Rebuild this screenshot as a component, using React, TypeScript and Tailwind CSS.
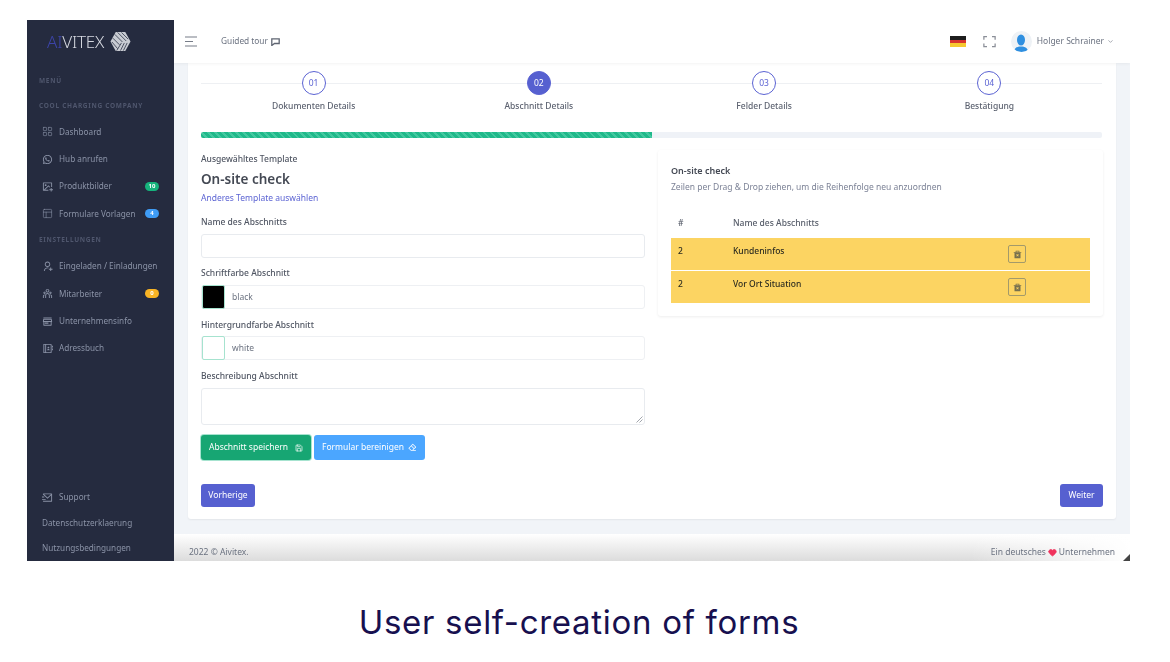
import React from "react";
import { LayoutGrid, PanelsTopLeft, ChevronDown, Save, Heart } from "lucide-react";
import { RiWhatsappLine, RiImageAddLine, RiUserAddLine, RiTeamLine, RiStore3Line, RiContactsBookLine, RiMailSendLine, RiDeleteBin2Fill, RiEraserLine, RiFullscreenLine } from "react-icons/ri";

const font = { fontFamily: '"Noto Sans", sans-serif' };

function Nav({ icon: Icon, label, badge, color }: { icon: any; label: string; badge?: string; color?: string }) {
  return (
    <div className="h-[27.4px] flex items-center pl-[15px] pr-[15px] text-[#8b93a7] text-[8.2px] whitespace-nowrap">
      <Icon size={11} className="mr-[6px] shrink-0" />
      <span className="flex-1">{label}</span>
      {badge && <span className={`w-[14px] h-[9px] rounded-full text-white text-[6px] leading-[9px] text-center font-bold ${color}`}>{badge}</span>}
    </div>
  );
}

const GridIcon = (p: any) => <LayoutGrid {...p} strokeWidth={1.3} />;
const PanelIcon = (p: any) => <PanelsTopLeft {...p} strokeWidth={1.3} />;

function Section({ children }: { children: React.ReactNode }) {
  return <div className="h-[25px] flex items-center pl-[12px] text-[#4f566d] text-[6.5px] font-bold tracking-[0.7px] uppercase">{children}</div>;
}

function Step({ n, label, active }: { n: string; label: string; active?: boolean }) {
  return (
    <div className="flex-1 flex flex-col items-center relative">
      <div className={`w-[24px] h-[24px] rounded-full border border-[#5b63d3] flex items-center justify-center text-[8.5px] z-10 ${active ? "bg-[#5660d0] text-white" : "bg-white text-[#5b63d3]"}`}>{n}</div>
      <div className="mt-[5px] text-[8.5px] leading-[12px] font-medium text-[#5c6270]">{label}</div>
    </div>
  );
}

function Label({ children }: { children: React.ReactNode }) {
  return <div className="text-[8.5px] leading-[12px] font-medium text-[#4f5562]">{children}</div>;
}

function ColorRow({ swatch, text, className }: { swatch: string; text: string; className: string }) {
  return (
    <div className={`${className} h-[24px] flex items-center border border-[#eef0f3] rounded-[3px]`}>
      <div className={`w-[23px] h-[24px] rounded-[2px] border border-[#a6e3cf] ${swatch}`} />
      <span className="ml-[7px] text-[8.5px] text-[#6b7280]">{text}</span>
    </div>
  );
}

function Row({ name }: { name: string }) {
  return (
    <div className="h-[32px] bg-[#fcd462] flex items-start text-[8.5px] font-medium text-[#2b2b20]">
      <span className="w-[62px] pl-[7px] pt-[7px] leading-[12px]">2</span>
      <span className="w-[275px] pt-[7px] leading-[12px]">{name}</span>
      <span className="mt-[7px] w-[18px] h-[18px] border border-[#a39a6a] rounded-[2px] flex items-center justify-center text-[#77704e]">
        <RiDeleteBin2Fill size={9} />
      </span>
    </div>
  );
}

export default function App() {
  return (
    <div className="w-[1170px] h-[662px] bg-white overflow-hidden" style={font}>
      <div className="pt-[20px] pl-[27px]">
        <div className="w-[1103px] h-[541px] flex bg-[#f1f4f8] overflow-hidden blur-[0.45px] relative">
          <aside className="w-[147px] shrink-0 bg-[#252b3f] flex flex-col">
            <div className="h-[43px] flex items-center pl-[20px]">
              <span className="text-[17px] font-light tracking-[-0.2px] text-[#d5d8e0]"><span className="text-[#3c44a8]">AI</span>VITEX</span>
              <svg width="21" height="21" viewBox="0 0 22 21" className="ml-[6px]">
                <path d="M6 0.5h10l5.5 10-5.5 10H6L0.5 10.5z" fill="#c8cbd2" />
                <path d="M5 3l8 8M8 1l9 9M12 1l7 7M3 7l7 7M2 11l6 7M12 12l-5 8M15 12l-4 8M18 12l-4 8" stroke="#252b3f" strokeWidth="0.8" />
              </svg>
            </div>
            <div className="h-[24px] mt-[6px] flex items-center pl-[12px] text-[#4f566d] text-[6.5px] font-bold tracking-[0.7px]">MENÜ</div>
            <Section>Cool Charging Company</Section>
            <div>
              <Nav icon={GridIcon} label="Dashboard" />
              <Nav icon={RiWhatsappLine} label="Hub anrufen" />
              <Nav icon={RiImageAddLine} label="Produktbilder" badge="10" color="bg-[#16b37c]" />
              <Nav icon={PanelIcon} label="Formulare Vorlagen" badge="4" color="bg-[#3f9cf5]" />
            </div>
            <Section>Einstellungen</Section>
            <Nav icon={RiUserAddLine} label="Eingeladen / Einladungen" />
            <Nav icon={RiTeamLine} label="Mitarbeiter" badge="0" color="bg-[#f8b425]" />
            <Nav icon={RiStore3Line} label="Unternehmensinfo" />
            <Nav icon={RiContactsBookLine} label="Adressbuch" />
            <div className="mt-auto">
              <Nav icon={RiMailSendLine} label="Support" />
              <div className="h-[25px] flex items-center pl-[15px] text-[#8b93a7] text-[8.2px]">Datenschutzerklaerung</div>
              <div className="h-[25px] flex items-center pl-[15px] text-[#8b93a7] text-[8.2px]">Nutzungsbedingungen</div>
            </div>
          </aside>
          <div className="flex-1 flex flex-col min-w-0">
            <header className="h-[43px] shrink-0 bg-white flex items-center pl-[11px] pr-[16px] shadow-[0_1px_3px_rgba(0,0,0,0.05)] z-10 text-[#6b7280]">
              <svg width="12" height="11" viewBox="0 0 12 11" stroke="#777d88" strokeWidth="1.2"><path d="M0 1h12M0 5.5h8M0 10h12" /></svg>
              <span className="ml-[24px] text-[8.3px]">Guided tour</span>
              <svg width="9" height="8" viewBox="0 0 9 8" className="ml-[3px]" fill="none" stroke="#5f6572" strokeWidth="1.3"><path d="M0.8 0.8h7.4v4.7h-4.7l-2.7 2z" /></svg>
              <div className="ml-auto flex items-center">
                <div className="w-[16px] h-[11px] flex flex-col">
                  <div className="flex-1 bg-[#1d1d1d]" /><div className="flex-1 bg-[#d8342c]" /><div className="flex-1 bg-[#f6c92f]" />
                </div>
                <RiFullscreenLine size={15} className="ml-[16px] text-[#8b8f98]" />
                <div className="ml-[14px] w-[21px] h-[21px] rounded-full bg-[#eef2f6] overflow-hidden flex items-end justify-center">
                  <svg width="16" height="18" viewBox="0 0 16 18" fill="#2f8fe0"><ellipse cx="8" cy="6" rx="4" ry="5.5" /><path d="M1 18c0-4 3-5.5 7-5.5s7 1.5 7 5.5z" /></svg>
                </div>
                <span className="ml-[5px] text-[8.5px]">Holger Schrainer</span>
                <ChevronDown size={7} className="ml-[3px]" />
              </div>
            </header>
            <div className="pl-[14px]">
              <div className="w-[928px] h-[456px] bg-white rounded-b-[3px] shadow-[0_1px_2px_rgba(0,0,0,0.06)] pl-[13px] pr-[14px] pt-[8px]">
                <div className="flex relative">
                  <div className="absolute left-0 right-0 top-[12px] h-px bg-[#eef0f3]" />
                  <Step n="01" label="Dokumenten Details" />
                  <Step n="02" label="Abschnitt Details" active />
                  <Step n="03" label="Felder Details" />
                  <Step n="04" label="Bestätigung" />
                </div>
                <div className="mt-[20px] h-[6px] rounded-[2px] bg-[#eff2f7] overflow-hidden">
                  <div className="h-full w-1/2 bg-[repeating-linear-gradient(45deg,#1fb98a_0px,#1fb98a_3px,#43c8a0_3px,#43c8a0_5px)]" />
                </div>
                <div className="mt-[15px] flex gap-[13px] items-start">
                  <div className="w-[444px] shrink-0">
                    <Label>Ausgewähltes Template</Label>
                    <div className="mt-[5px] text-[13.5px] leading-[18px] font-semibold text-[#444954]">On-site check</div>
                    <div className="mt-[4px] text-[8.5px] leading-[12px] text-[#5b63d3]">Anderes Template auswählen</div>
                    <div className="mt-[12px]"><Label>Name des Abschnitts</Label></div>
                    <div className="mt-[6px] h-[24px] border border-[#e8ebef] rounded-[3px]" />
                    <div className="mt-[9px]"><Label>Schriftfarbe Abschnitt</Label></div>
                    <ColorRow className="mt-[6px]" swatch="bg-black" text="black" />
                    <div className="mt-[10px]"><Label>Hintergrundfarbe Abschnitt</Label></div>
                    <ColorRow className="mt-[5px]" swatch="bg-white" text="white" />
                    <div className="mt-[10px]"><Label>Beschreibung Abschnitt</Label></div>
                    <div className="mt-[6px] h-[37px] border border-[#e8ebef] rounded-[3px] relative">
                      <svg width="7" height="7" viewBox="0 0 7 7" stroke="#8a8f98" strokeWidth="0.8" className="absolute right-[1px] bottom-[1px]"><path d="M6.5 0.5l-6 6M6.5 3.5l-3 3" /></svg>
                    </div>
                    <div className="mt-[10px] flex gap-[3px]">
                      <div className="w-[110px] h-[25px] bg-[#17a673] rounded-[3px] shadow-[0_0_0_1px_#a6e3cf] text-white text-[8.5px] flex items-center justify-between pl-[8px] pr-[8px]">
                        <span>Abschnitt speichern</span><Save size={8} />
                      </div>
                      <div className="w-[111px] h-[25px] bg-[#4ba6ff] rounded-[3px] text-white text-[8.5px] flex items-center justify-between pl-[8px] pr-[8px]">
                        <span>Formular bereinigen</span><RiEraserLine size={9} />
                      </div>
                    </div>
                  </div>
                  <div className="w-[445px] h-[166px] shrink-0 mt-[-3px] rounded-[3px] bg-white shadow-[0_1px_3px_rgba(0,0,0,0.07)] px-[13px] pt-[15px]">
                    <div className="text-[9px] leading-[12px] font-semibold text-[#444954]">On-site check</div>
                    <div className="mt-[4px] text-[8.5px] leading-[12px] text-[#7c8296]">Zeilen per Drag &amp; Drop ziehen, um die Reihenfolge neu anzuordnen</div>
                    <div className="w-[419px] mt-[16px]">
                      <div className="h-[29px] flex items-center text-[8.5px] font-medium text-[#555b68]">
                        <span className="w-[62px] pl-[7px]">#</span><span>Name des Abschnitts</span>
                      </div>
                      <div className="flex flex-col gap-[1px]">
                        <Row name="Kundeninfos" />
                        <Row name="Vor Ort Situation" />
                      </div>
                    </div>
                  </div>
                </div>
                <div className="mt-[24px] flex justify-between">
                  <div className="w-[54px] h-[23px] rounded-[3px] bg-[#5660d0] text-white text-[8.5px] flex items-center justify-center">Vorherige</div>
                  <div className="w-[43px] h-[23px] rounded-[3px] bg-[#5660d0] text-white text-[8.5px] flex items-center justify-center mr-[-1px]">Weiter</div>
                </div>
              </div>
            </div>
            <footer className="mt-[15px] flex-1 bg-gradient-to-b from-white to-[#dcdcdc] relative">
              <div className="absolute inset-y-0 right-0 w-[160px] bg-gradient-to-r from-transparent to-white" />
              <div className="relative h-full flex items-center justify-between pl-[15px] pr-[15px] text-[8.5px] text-[#6b7280] pt-[10px]">
                <span>2022 © Aivitex.</span>
                <span className="flex items-center gap-[2px]">Ein deutsches <Heart size={9} fill="#f0325c" stroke="#f0325c" /> Unternehmen</span>
              </div>
              <span className="absolute right-0 bottom-0 w-0 h-0 border-l-[7px] border-l-transparent border-b-[7px] border-b-[#444]" />
            </footer>
          </div>
        </div>
        <div className="ml-[-27px] mt-[40px] w-[1170px] pr-[12px] text-center text-[33px] tracking-[0.7px] leading-[42px] text-[#17104f]" style={{ fontFamily: "Inter, sans-serif" }}>User self-creation of forms</div>
      </div>
    </div>
  );
}
